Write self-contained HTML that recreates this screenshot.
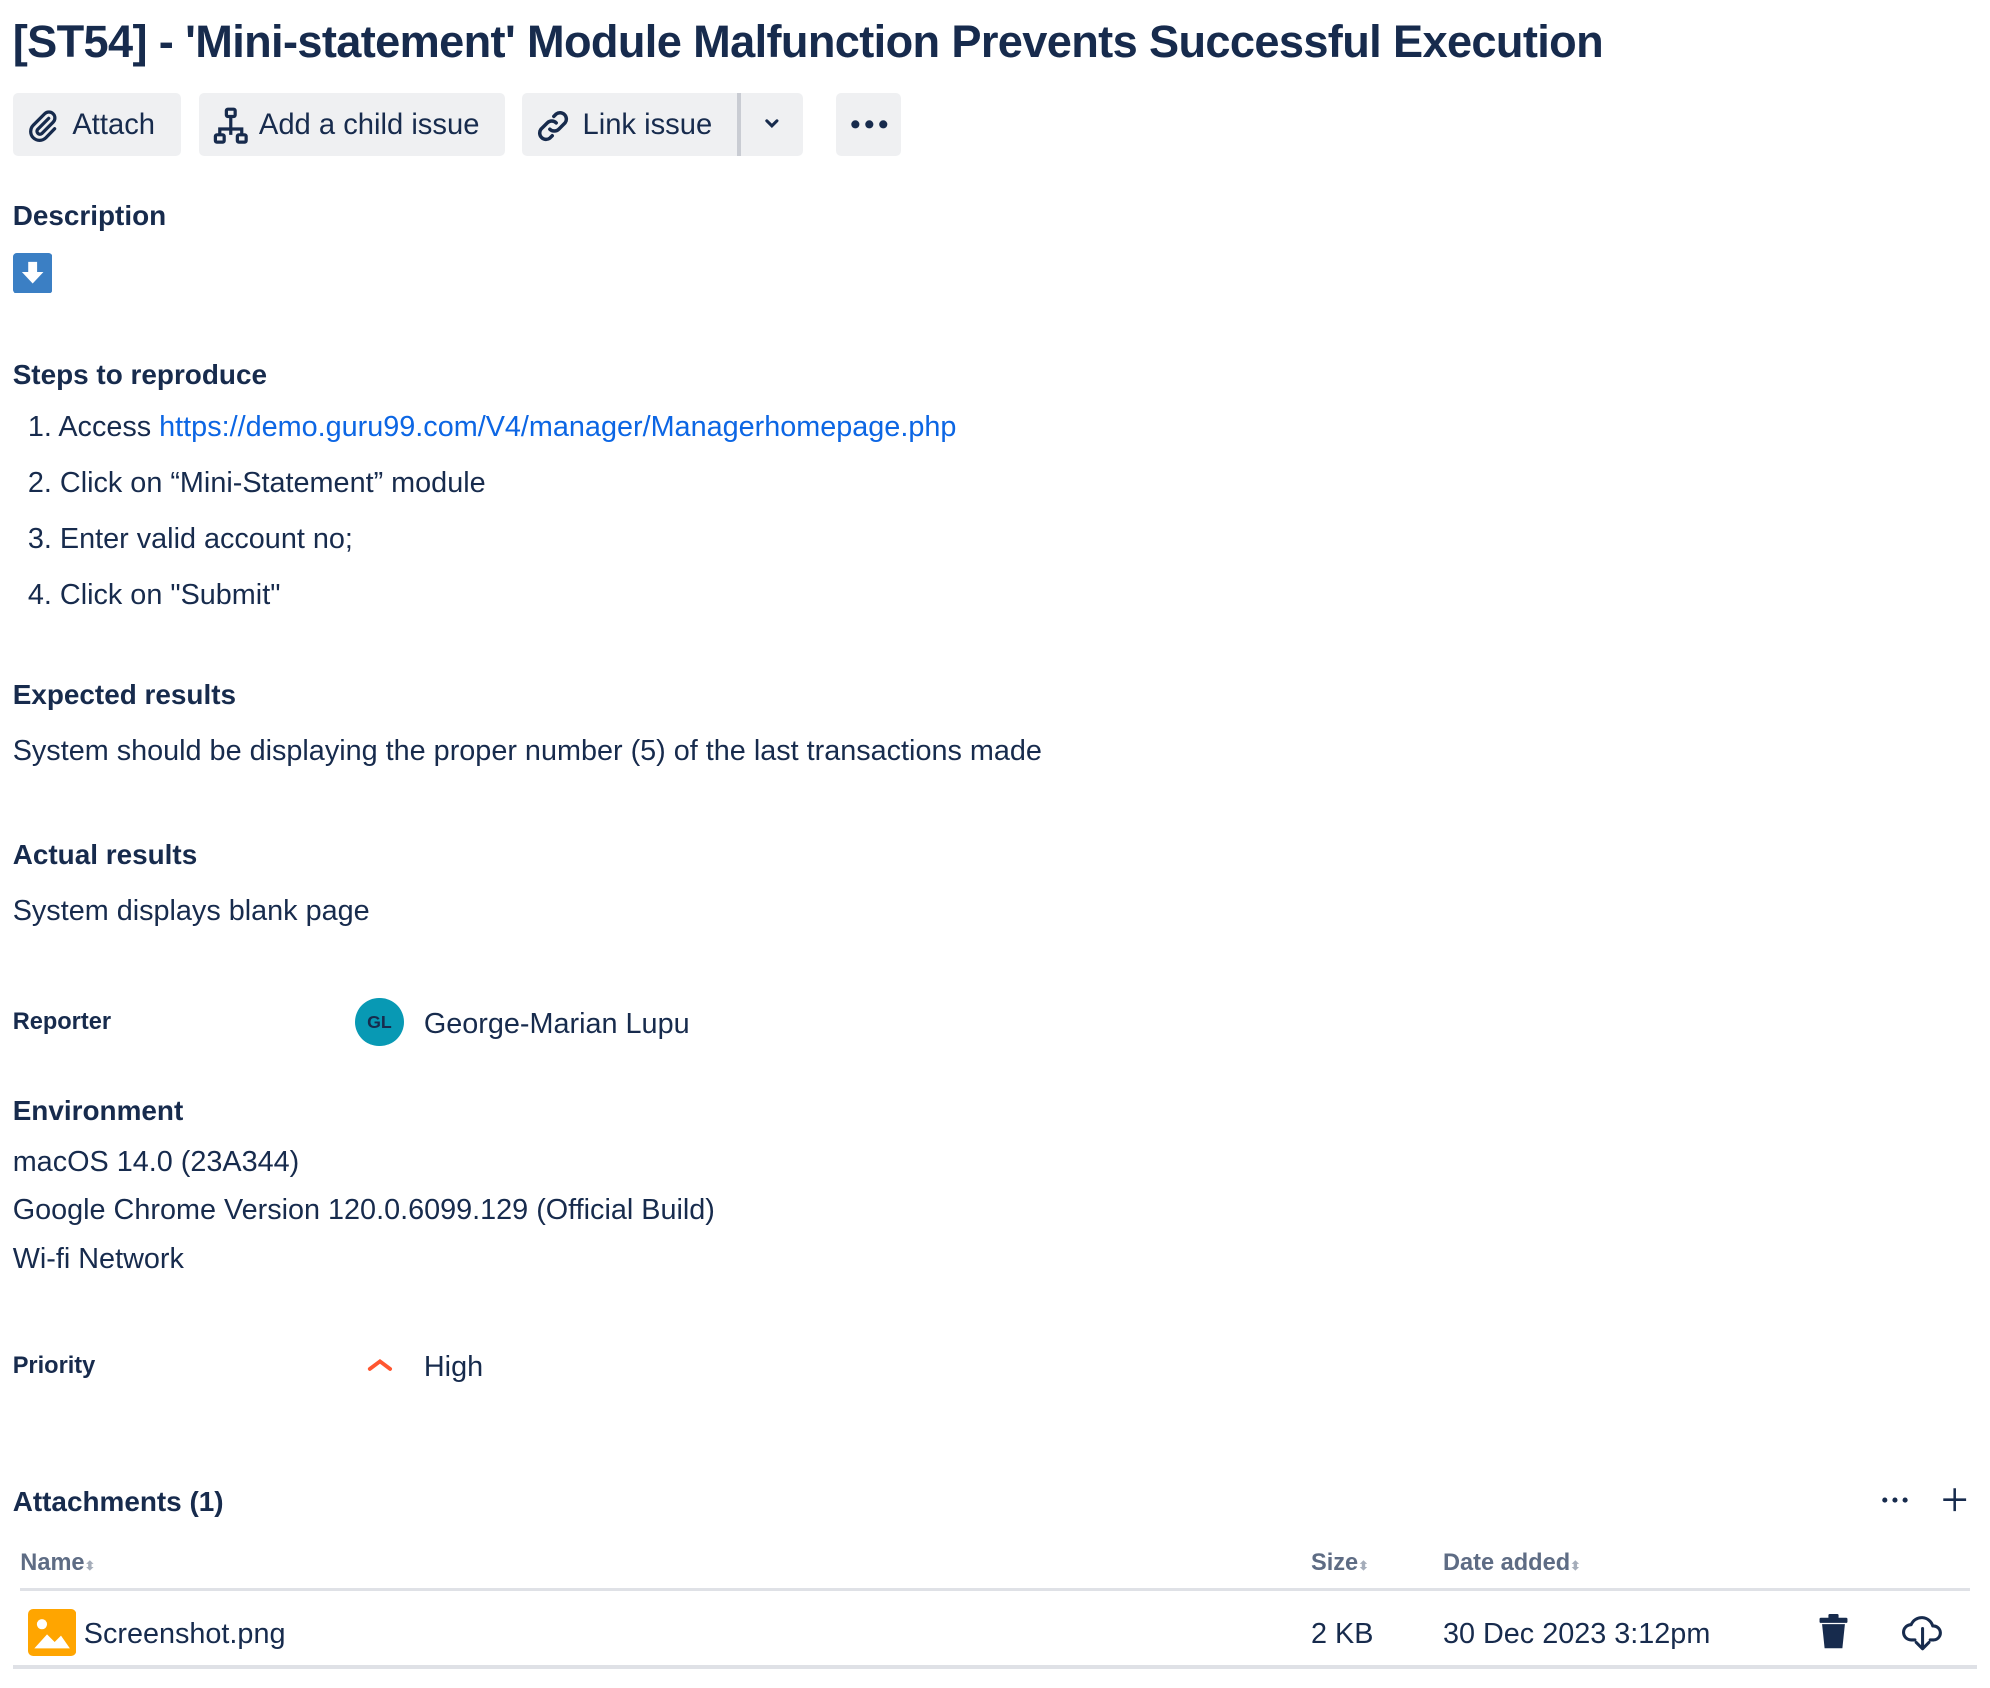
<!DOCTYPE html>
<html><head><meta charset="utf-8"><style>
html,body{margin:0;padding:0;background:#fff;}
body{width:1990px;height:1686px;overflow:hidden;position:relative;}
#z{zoom:1.2691;position:absolute;left:0;top:0;width:1568px;height:1330px;font-family:"Liberation Sans",Arial,sans-serif;color:#172b4d;}
.a{position:absolute;white-space:nowrap;}
.t{font-size:22.7px;line-height:24px;margin-top:2px;}
.h{font-size:22px;font-weight:bold;line-height:24px;margin-top:2px;}
.l{font-size:18.6px;font-weight:bold;line-height:22px;margin-top:2px;}
.btn{position:absolute;top:73px;height:50px;background:#eff0f2;border-radius:4px;}
.btn span{position:absolute;top:14px;font-size:23px;line-height:24px;}
</style></head><body><div id="z">
<div class="a" style="left:10px;top:12px;font-size:35.6px;line-height:42px;font-weight:bold;letter-spacing:-0.5px;">[ST54] - 'Mini-statement' Module Malfunction Prevents Successful Execution</div>

<div class="btn" style="left:10px;width:133px;">
<svg class="a" style="left:10px;top:12px" width="28" height="28" viewBox="0 0 24 24" fill="none" stroke="#172b4d" stroke-width="2.2" stroke-linecap="round"><path d="M16 7 L8.5 14.5 a2 2 0 0 0 2.8 2.8 L19 9.6 a4 4 0 0 0 -5.7 -5.7 L5.6 11.6 a6 6 0 0 0 8.5 8.5 L20 14"/></svg>
<span style="left:47px">Attach</span></div>
<div class="btn" style="left:157px;width:241px;">
<svg class="a" style="left:11px;top:11px" width="28" height="30" viewBox="0 0 24 26" fill="none" stroke="#172b4d" stroke-width="2.2"><rect x="9" y="1.5" width="6" height="5" rx="1"/><rect x="1.5" y="19" width="6" height="5" rx="1"/><rect x="16.5" y="19" width="6" height="5" rx="1"/><path d="M12 6.5V19M4.5 19v-4h15v4"/></svg>
<span style="left:47px">Add a child issue</span></div>
<div class="btn" style="left:411px;width:222px;">
<svg class="a" style="left:10px;top:11px" width="30" height="30" viewBox="0 0 24 24" fill="none" stroke="#172b4d" stroke-width="2.2" stroke-linecap="round"><path d="M10 14a4 4 0 0 0 5.6 0l4-4a4 4 0 0 0-5.6-5.6l-1.5 1.5"/><path d="M14 10a4 4 0 0 0-5.6 0l-4 4a4 4 0 0 0 5.6 5.6l1.5-1.5"/></svg>
<span style="left:48px">Link issue</span>
<div class="a" style="left:170px;top:0;width:3px;height:50px;background:#c9ccd3"></div>
<svg class="a" style="left:190px;top:19px" width="14" height="12" viewBox="0 0 14 12" fill="none" stroke="#172b4d" stroke-width="2.4" stroke-linecap="round"><path d="M3 3l4 4 4-4"/></svg>
</div>
<div class="btn" style="left:659px;width:51px;">
<svg class="a" style="left:10px;top:20px" width="32" height="10"><circle cx="5" cy="5" r="3.2" fill="#172b4d"/><circle cx="16" cy="5" r="3.2" fill="#172b4d"/><circle cx="27" cy="5" r="3.2" fill="#172b4d"/></svg></div>

<div class="a h" style="left:10px;top:156px;">Description</div>
<svg class="a" style="left:10px;top:199px" width="31" height="32" viewBox="0 0 31 32"><rect width="31" height="32" rx="3" fill="#3b7fc4"/><path d="M12 7h7v8h5l-8.5 9L7 15h5z" fill="#fff"/></svg>

<div class="a h" style="left:10px;top:282px;">Steps to reproduce</div>
<div class="a t" style="left:22px;top:323px;">1. Access <span style="color:#0c66e4">https://demo.guru99.com/V4/manager/Managerhomepage.php</span></div>
<div class="a t" style="left:22px;top:367px;">2. Click on “Mini-Statement” module</div>
<div class="a t" style="left:22px;top:411px;">3. Enter valid account no;</div>
<div class="a t" style="left:22px;top:455px;">4. Click on "Submit"</div>

<div class="a h" style="left:10px;top:534px;">Expected results</div>
<div class="a t" style="left:10px;top:578px;">System should be displaying the proper number (5) of the last transactions made</div>
<div class="a h" style="left:10px;top:660px;">Actual results</div>
<div class="a t" style="left:10px;top:704px;">System displays blank page</div>

<div class="a l" style="left:10px;top:793px;">Reporter</div>
<div class="a" style="left:280px;top:786px;width:38px;height:38px;border-radius:50%;background:#0899b4;color:#172b4d;font-size:14px;font-weight:bold;line-height:38px;text-align:center;">GL</div>
<div class="a t" style="left:334px;top:793px;">George-Marian Lupu</div>

<div class="a h" style="left:10px;top:862px;">Environment</div>
<div class="a t" style="left:10px;top:902px;">macOS 14.0 (23A344)</div>
<div class="a t" style="left:10px;top:940px;">Google Chrome Version 120.0.6099.129 (Official Build)</div>
<div class="a t" style="left:10px;top:978px;">Wi-fi Network</div>

<div class="a l" style="left:10px;top:1064px;">Priority</div>
<svg class="a" style="left:288px;top:1068px" width="22" height="14" viewBox="0 0 22 14" fill="none" stroke="#ff5630" stroke-width="3" stroke-linecap="round"><path d="M3 11l8-6 8 6"/></svg>
<div class="a t" style="left:334px;top:1063px;">High</div>

<div class="a h" style="left:10px;top:1170px;">Attachments (1)</div>
<svg class="a" style="left:1482px;top:1178px" width="22" height="8"><circle cx="3" cy="4" r="2" fill="#172b4d"/><circle cx="11" cy="4" r="2" fill="#172b4d"/><circle cx="19" cy="4" r="2" fill="#172b4d"/></svg>
<svg class="a" style="left:1530px;top:1172px" width="20" height="20" stroke="#172b4d" stroke-width="2"><path d="M10 1v18M1 10h18"/></svg>

<div class="a l" style="left:16px;top:1219px;color:#5e6c84;">Name<span style="font-size:10px;color:#a5adba">⬍</span></div>
<div class="a l" style="left:1033px;top:1219px;color:#5e6c84;">Size<span style="font-size:10px;color:#a5adba">⬍</span></div>
<div class="a l" style="left:1137px;top:1219px;color:#5e6c84;">Date added<span style="font-size:10px;color:#a5adba">⬍</span></div>
<div class="a" style="left:16px;top:1251px;width:1536px;height:3px;background:#dfe1e6"></div>

<svg class="a" style="left:22px;top:1268px" width="38" height="37" viewBox="0 0 38 37"><rect width="38" height="37" rx="4" fill="#ffa500"/><circle cx="11" cy="12" r="4" fill="#fff"/><path d="M5 31l10-11 6 6 5-5 7 10z" fill="#fff"/></svg>
<div class="a t" style="left:66px;top:1274px;">Screenshot.png</div>
<div class="a t" style="left:1033px;top:1274px;">2 KB</div>
<div class="a t" style="left:1137px;top:1274px;">30 Dec 2023 3:12pm</div>
<svg class="a" style="left:1432px;top:1272px" width="26" height="28" viewBox="0 0 26 28"><rect x="2" y="3" width="22" height="4" rx="1" fill="#172b4d"/><rect x="9" y="0" width="8" height="4" rx="1" fill="#172b4d"/><path d="M4 8h18l-2 19H6z" fill="#172b4d"/></svg>
<svg class="a" style="left:1498px;top:1270px" width="34" height="32" viewBox="0 0 34 32" fill="none" stroke="#172b4d" stroke-width="2.4" stroke-linecap="round" stroke-linejoin="round"><path d="M11 22H8a6 6 0 0 1 0-12 9 9 0 0 1 17 1 5.5 5.5 0 0 1 1 11h-3"/><path d="M17 13v16M12 24l5 5 5-5"/></svg>
<div class="a" style="left:10px;top:1312px;width:1548px;height:3px;background:#dfe1e6"></div>
</div></body></html>
